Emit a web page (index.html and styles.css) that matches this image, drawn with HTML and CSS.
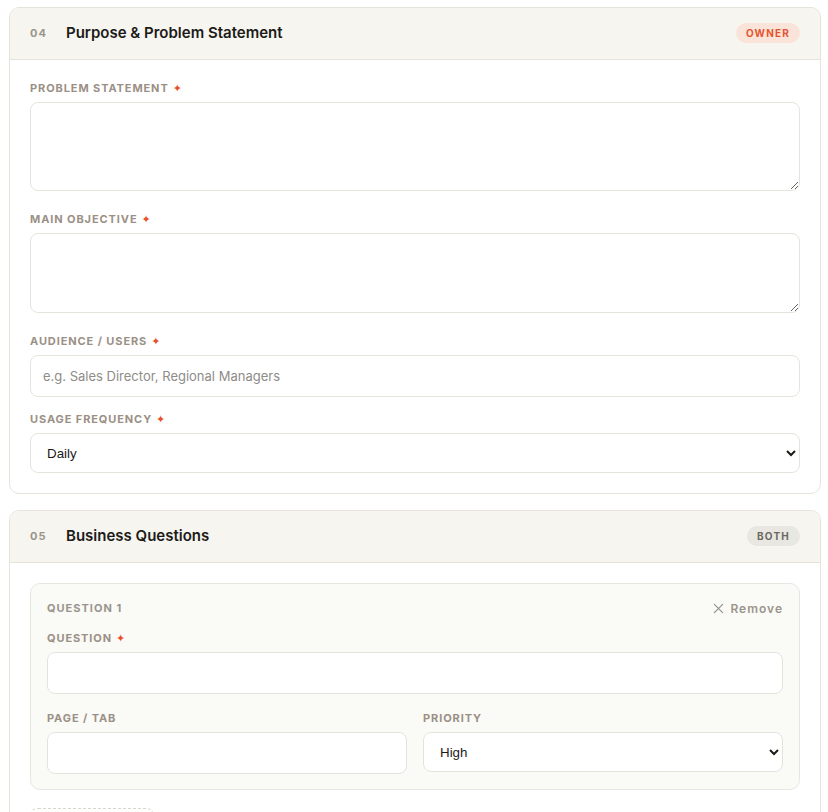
FILE: index.html
```html
<!DOCTYPE html>
<html lang="en">
<head>
  <meta charset="UTF-8">
  <meta name="viewport" content="width=device-width, initial-scale=1">
  <title>Dashboard Request</title>
  <link rel="stylesheet" href="styles.css">
</head>
<body>
  <div class="page">

    <!-- 04 purpose -->
    <section class="card">
      <div class="card-head">
        <span class="card-num">04</span>
        <h2 class="card-title">Purpose &amp; Problem Statement</h2>
        <span class="badge badge-owner">Owner</span>
      </div>
      <div class="card-body">
        <div class="field field-area">
          <label class="label" for="problem">Problem Statement <span class="req">✦</span></label>
          <textarea id="problem" class="input area-lg"></textarea>
        </div>
        <div class="field field-area">
          <label class="label" for="objective">Main Objective <span class="req">✦</span></label>
          <textarea id="objective" class="input area-md"></textarea>
        </div>
        <div class="field">
          <label class="label" for="audience">Audience / Users <span class="req">✦</span></label>
          <input id="audience" class="input" type="text" placeholder="e.g. Sales Director, Regional Managers">
        </div>
        <div class="field field-last">
          <label class="label" for="frequency">Usage Frequency <span class="req">✦</span></label>
          <select id="frequency" class="input select">
            <option>Daily</option>
            <option>Weekly</option>
            <option>Monthly</option>
          </select>
        </div>
      </div>
    </section>

    <!-- 05 questions -->
    <section class="card">
      <div class="card-head">
        <span class="card-num">05</span>
        <h2 class="card-title">Business Questions</h2>
        <span class="badge badge-both">Both</span>
      </div>
      <div class="card-body">
        <div class="question">
          <div class="question-head">
            <span class="question-num">Question 1</span>
            <button class="remove" type="button">
              <svg width="11" height="11" viewBox="0 0 12 12" aria-hidden="true">
                <path d="M1.5 1.5l9 9M10.5 1.5l-9 9" stroke="currentColor" stroke-width="1.4" stroke-linecap="round"/>
              </svg>
              Remove
            </button>
          </div>
          <div class="field field-q">
            <label class="label" for="q1">Question <span class="req">✦</span></label>
            <input id="q1" class="input" type="text">
          </div>
          <div class="field-row">
            <div class="field field-last">
              <label class="label" for="q1page">Page / Tab</label>
              <input id="q1page" class="input" type="text">
            </div>
            <div class="field field-last">
              <label class="label" for="q1prio">Priority</label>
              <select id="q1prio" class="input select">
                <option>High</option>
                <option>Medium</option>
                <option>Low</option>
              </select>
            </div>
          </div>
        </div>
        <button class="add-btn" type="button">+ Add Question</button>
      </div>
    </section>

  </div>
</body>
</html>
```

FILE: styles.css
```css
* {
  box-sizing: border-box;
  margin: 0;
  padding: 0;
}

body {
  background: #ffffff;
  font-family: Inter, 'Noto Sans', sans-serif;
  color: #1c1b18;
}

.page {
  width: 812px;
  margin-left: 9px;
  padding-top: 7px;
}

.card {
  background: #ffffff;
  border: 1px solid #e6e3da;
  border-radius: 10px;
  overflow: hidden;
  margin-bottom: 16px;
}

.card-head {
  display: flex;
  align-items: center;
  height: 52px;
  padding: 0 20px 1px;
  background: #f6f5f0;
  border-bottom: 1px solid #e6e3da;
}

.card-num {
  width: 36px;
  font-size: 11px;
  font-weight: 700;
  letter-spacing: 1px;
  color: #9a958c;
}

.card-title {
  flex: 1;
  font-size: 15px;
  font-weight: 600;
  line-height: 20px;
  color: #1c1b18;
}

.badge {
  height: 20px;
  line-height: 20px;
  padding: 0 10px;
  border-radius: 10px;
  font-size: 10px;
  font-weight: 700;
  letter-spacing: 1.2px;
  text-transform: uppercase;
}

.badge-owner {
  background: #fae4da;
  color: #e4552f;
}

.badge-both {
  background: #e8e7e1;
  color: #6b675f;
}

.card-body {
  padding: 20px;
}

/* fields */
.field {
  margin-bottom: 14px;
}

.field-area {
  margin-bottom: 20px;
}

.field-last {
  margin-bottom: 0;
}

.label {
  display: flex;
  align-items: center;
  gap: 4px;
  height: 16px;
  margin-bottom: 6px;
  font-size: 11px;
  font-weight: 700;
  letter-spacing: 0.9px;
  text-transform: uppercase;
  color: #9b9085;
}

.req {
  font-family: 'DejaVu Sans', sans-serif;
  font-size: 11px;
  line-height: 1;
  color: #e8502a;
}

.input {
  display: block;
  width: 100%;
  height: 42px;
  padding: 0 12px;
  background: #ffffff;
  border: 1px solid #e6e3dc;
  border-radius: 8px;
  font-family: Inter, 'Noto Sans', sans-serif;
  font-size: 13px;
  color: #1c1b18;
  outline: none;
}

.input::placeholder {
  color: #8e8c88;
}

textarea.input {
  padding: 10px 12px;
  resize: vertical;
}

.area-lg {
  height: 89px;
}

.area-md {
  height: 80px;
}

.select {
  height: 40px;
  font-family: 'Liberation Sans', Arial, sans-serif;
  font-size: 13.33px;
  padding: 0 12px;
}

/* question block */
.question {
  background: #fafaf7;
  border: 1px solid #e8e6df;
  border-radius: 10px;
  padding: 16px 16px 15px;
}

.question-head {
  display: flex;
  align-items: center;
  justify-content: space-between;
  height: 16px;
  margin-bottom: 14px;
}

.question-num {
  font-size: 11px;
  font-weight: 700;
  letter-spacing: 1px;
  text-transform: uppercase;
  color: #9a958c;
}

.remove {
  display: flex;
  align-items: center;
  gap: 6px;
  background: none;
  border: none;
  font-family: Inter, 'Noto Sans', sans-serif;
  font-size: 12px;
  font-weight: 600;
  letter-spacing: 1px;
  color: #9a958c;
  cursor: pointer;
}

.field-q {
  margin-bottom: 16px;
}

.field-row {
  display: grid;
  grid-template-columns: 1fr 1fr;
  gap: 16px;
  align-items: start;
}

.add-btn {
  margin-top: 18px;
  height: 36px;
  padding: 0 16px;
  background: #ffffff;
  border: 1px dashed #d9d5cc;
  border-radius: 8px;
  font-family: Inter, 'Noto Sans', sans-serif;
  font-size: 12px;
  font-weight: 600;
  color: #9a958c;
  cursor: pointer;
}
```
